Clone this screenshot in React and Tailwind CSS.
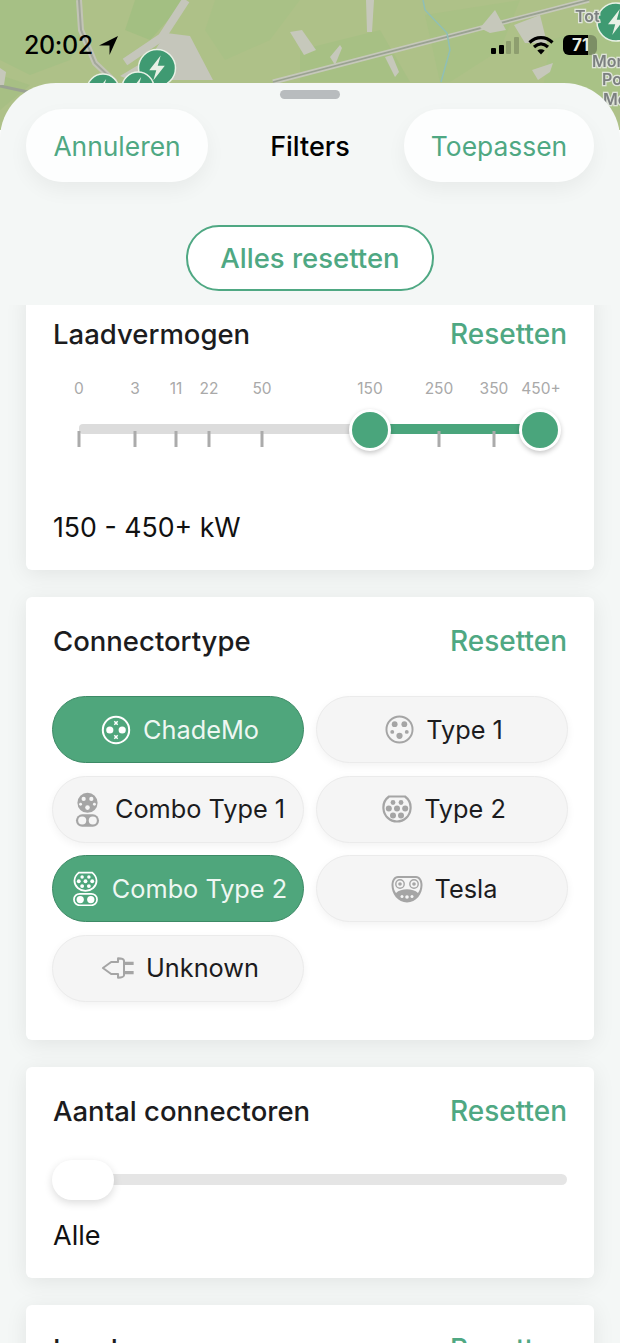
const ticks = [
    { label: '0', x: 26 },
    { label: '3', x: 82 },
    { label: '11', x: 123 },
    { label: '22', x: 156 },
    { label: '50', x: 209 },
    { label: '150', x: 317, hidden: true },
    { label: '250', x: 386 },
    { label: '350', x: 441 },
    { label: '450+', x: 488, hidden: true },
];

const Bolt = ({ cx, cy, r }) => (
    <g>
        <circle cx={cx} cy={cy} r={r} fill="#3f9a72" stroke="#e8f1e6" strokeWidth="1.5" />
        <path
            d={`M${cx + r * 0.2} ${cy - r * 0.68} L${cx - r * 0.42} ${cy + r * 0.12} L${cx - r * 0.04} ${cy + r * 0.12} L${cx - r * 0.2} ${cy + r * 0.68} L${cx + r * 0.42} ${cy - r * 0.12} L${cx + r * 0.04} ${cy - r * 0.12} Z`}
            fill="#e8f1e6"
        />
    </g>
);

// map behind the sheet, only the top 90px or so is visible
const MapBackground = () => (
    <svg className="absolute top-0 left-0 blur-[0.6px]" width="620" height="130" viewBox="0 0 620 130">
        <rect width="620" height="130" fill="#aec188" />
        <path d="M0 0H78L84 30L70 60L30 75L0 60Z" fill="#a6c085" />
        <path d="M135 0H186L150 40L125 30Z" fill="#a3bf82" />
        <path d="M215 0H300L270 40L225 60L205 30Z" fill="#a9c186" />
        <path d="M300 50L380 30L410 82H300Z" fill="#a7c084" />
        <path d="M425 15L520 0L500 50L450 82H440Z" fill="#a9c185" />
        <path d="M550 40L620 20V110H540Z" fill="#a9c286" />
        <path d="M0 75L30 85L0 110Z" fill="#a7bf84" />
        {/* roads and built up bits */}
        <path d="M79 0L81 30L95 63L115 82" fill="none" stroke="#c2c4b6" strokeWidth="6" />
        <path d="M79 0L81 30L95 63L115 82" fill="none" stroke="#a3a79b" strokeWidth="2" />
        <path d="M186 0L162 37L125 62" fill="none" stroke="#c5c6bb" strokeWidth="8" />
        <path d="M166 33L190 36L213 80H130L120 76L150 58Z" fill="#c5c6bb" />
        <path d="M273 82L589 0" fill="none" stroke="#c6c8bb" strokeWidth="5" />
        <path d="M273 82L589 0" fill="none" stroke="#9aa292" strokeWidth="1.8" />
        <path d="M0 86L28 92" fill="none" stroke="#9aa292" strokeWidth="3" />
        <path d="M290 32L302 30L316 50L304 55Z" fill="#c6c8bb" />
        <path d="M330 57L340 45L342 48L335 65Z" fill="#c6c8bb" />
        <path d="M366 0H374L372 32H367Z" fill="#c6c8bb" />
        <path d="M385 57L392 55L399 72L395 77Z" fill="#c6c8bb" />
        <path d="M480 28L495 10L506 30L490 33Z" fill="#c6c8bb" />
        <path d="M514 25L540 15L547 43L525 43Z" fill="#c6c8bb" />
        <path d="M532 70L553 63L550 72L538 80Z" fill="#c6c8bb" />
        <path d="M423 0L425 10L447 33L450 50L441 82" fill="none" stroke="#8fbfb6" strokeWidth="1.5" />
        <path d="M0 68L6 72L4 85L0 85Z" fill="#c6c8bb" />
        <Bolt cx={157} cy={68} r={18.5} />
        <Bolt cx={103} cy={90} r={16} />
        <Bolt cx={138} cy={88} r={16} />
        <Bolt cx={616} cy={22} r={19} />
        <g fontFamily="Inter, sans-serif" fontSize="16" fontWeight="600" fill="#7c8080" stroke="#dfe4da" strokeWidth="2.5" paintOrder="stroke">
            <text x="575" y="22">Tot</text>
            <text x="592" y="67">Mor</text>
            <text x="602" y="85">Po</text>
            <text x="603" y="105">Mo</text>
        </g>
    </svg>
);

const StatusBar = () => (
    <div className="absolute top-[31px] left-[24px] right-[32px] flex items-center justify-between">
        <div className="flex items-center gap-[6px]">
            <span className="text-[25px] leading-[28px] font-medium tracking-[-0.4px] text-black">20:02</span>
            <svg width="19" height="19" viewBox="0 0 19 19">
                <path d="M19 0L0 9.5H10.5V19Z" fill="#000" />
            </svg>
        </div>
        <div className="flex items-center gap-[9px]">
            <svg width="28" height="17" viewBox="0 0 28 17">
                <rect x="0" y="11" width="5" height="6" rx="1" fill="#000" />
                <rect x="8" y="8" width="5" height="9" rx="1" fill="#000" />
                <rect x="15" y="4" width="5" height="13" rx="1" fill="#000" opacity="0.18" />
                <rect x="23" y="0" width="5" height="17" rx="1" fill="#000" opacity="0.18" />
            </svg>
            <svg width="26" height="19" viewBox="0 0 26 19" fill="none" stroke="#000" strokeWidth="3.2">
                <path d="M1.5 6.5C8.5 0 17.5 0 24.5 6.5" />
                <path d="M6 11C10.5 7 15.5 7 20 11" />
                <path d="M13 18.5L9.3 14.5C11.5 12.8 14.5 12.8 16.7 14.5Z" fill="#000" stroke="none" />
            </svg>
            <div className="relative flex h-[20px] w-[25px] items-center rounded-l-[6px] bg-black">
                <span className="pl-[9px] text-[17px] leading-none font-bold text-[#e6eadf]">71</span>
                <span className="absolute left-[25px] top-0 h-[20px] w-[9px] rounded-r-[6px] bg-[#5f6a50]/60"></span>
            </div>
        </div>
    </div>
);

const PowerSlider = () => (
    <div className="relative mt-[31px] h-[132px]">
        {ticks.map((t) => (
            <span
                key={t.label}
                className="absolute top-0 -translate-x-1/2 text-[15.5px] leading-[18px] text-[#a9a9a9]"
                style={{ left: t.x }}
            >
                {t.label}
            </span>
        ))}
        <div className="absolute top-[44px] left-[26px] h-[10px] w-[300px] rounded-l-[4px] bg-[#dcdcdc]"></div>
        <div className="absolute top-[44px] left-[317px] h-[10px] w-[170px] bg-[#4aa57c]"></div>
        {ticks.filter((t) => !t.hidden).map((t) => (
            <span key={t.label} className="absolute top-[51px] h-[16px] w-[3px] -translate-x-1/2 bg-[#ababab]" style={{ left: t.x }}></span>
        ))}
        {[317, 487].map((x) => (
            <span
                key={x}
                className="absolute top-[29px] h-[42px] w-[42px] -translate-x-1/2 rounded-full border-[3px] border-white bg-[#4aa57c] shadow-[0_2px_5px_rgba(0,0,0,0.22)]"
                style={{ left: x }}
            ></span>
        ))}
    </div>
);

const ChadeMoIcon = () => (
    <svg width="30" height="30" viewBox="0 0 30 30" fill="none" stroke="currentColor">
        <circle cx="15" cy="15" r="13.2" strokeWidth="2" />
        <circle cx="8.8" cy="15" r="3.6" fill="currentColor" stroke="none" />
        <circle cx="21.2" cy="15" r="3.6" fill="currentColor" stroke="none" />
        <path d="M13.3 6.3L16.7 9.7M16.7 6.3L13.3 9.7M13.3 20.3L16.7 23.7M16.7 20.3L13.3 23.7" strokeWidth="1.5" />
    </svg>
);

const Type1Icon = () => (
    <svg width="29" height="29" viewBox="0 0 30 30" fill="currentColor">
        <circle cx="15" cy="15" r="13.5" fill="none" stroke="currentColor" strokeWidth="2" />
        <circle cx="10" cy="9.5" r="3" />
        <circle cx="20" cy="9.5" r="3" />
        <circle cx="15" cy="21.5" r="3.2" />
        <circle cx="7.5" cy="17.5" r="2" />
        <circle cx="22.5" cy="17.5" r="2" />
    </svg>
);

const Type2Icon = () => (
    <svg width="30" height="28" viewBox="0 0 30 28" fill="currentColor">
        <path d="M7 1.5H23C27 4.5 29 9.5 28.5 14C28 21 22 26.5 15 26.5C8 26.5 2 21 1.5 14C1 9.5 3 4.5 7 1.5Z" fill="none" stroke="currentColor" strokeWidth="2.2" />
        <circle cx="11" cy="7.5" r="2.4" />
        <circle cx="19" cy="7.5" r="2.4" />
        <circle cx="6.8" cy="13.5" r="3" />
        <circle cx="15" cy="13.5" r="3" />
        <circle cx="23.2" cy="13.5" r="3" />
        <circle cx="11" cy="20.5" r="3" />
        <circle cx="19" cy="20.5" r="3" />
    </svg>
);

const TeslaIcon = () => (
    <svg width="32" height="28" viewBox="0 0 32 28">
        <path d="M7 1H25C29 1 31.5 5 31.5 10C31.5 19 25 27.5 16 27.5C7 27.5 0.5 19 0.5 10C0.5 5 3 1 7 1Z" fill="currentColor" />
        <path d="M7 3H25C27.5 3 29.5 6 29.5 10C29.5 13 28.5 16 27 18C22 13 10 13 5 18C3.5 16 2.5 13 2.5 10C2.5 6 4.5 3 7 3Z" fill="#f5f5f5" />
        <circle cx="9" cy="9" r="4.2" fill="none" stroke="currentColor" strokeWidth="1.4" />
        <circle cx="9" cy="9" r="1.8" fill="currentColor" />
        <circle cx="23" cy="9" r="4.2" fill="none" stroke="currentColor" strokeWidth="1.4" />
        <circle cx="23" cy="9" r="1.8" fill="currentColor" />
        <circle cx="11" cy="21.5" r="1.5" fill="#f5f5f5" />
        <circle cx="16" cy="22" r="1.8" fill="#f5f5f5" />
        <circle cx="21" cy="21.5" r="1.5" fill="#f5f5f5" />
    </svg>
);

const ComboType1Icon = () => (
    <svg width="25" height="35" viewBox="0 0 26 36" fill="currentColor">
        <circle cx="13" cy="11" r="10.5" />
        <circle cx="9" cy="7" r="2.2" fill="#f5f5f5" />
        <circle cx="17" cy="7" r="2.2" fill="#f5f5f5" />
        <circle cx="5.8" cy="12.5" r="1.5" fill="#f5f5f5" />
        <circle cx="20.2" cy="12.5" r="1.5" fill="#f5f5f5" />
        <circle cx="13" cy="16" r="2.4" fill="#f5f5f5" />
        <rect x="1" y="23" width="24" height="13" rx="6.5" />
        <circle cx="7.5" cy="29.5" r="4.2" fill="#f5f5f5" />
        <circle cx="18.5" cy="29.5" r="4.2" fill="#f5f5f5" />
    </svg>
);

const ComboType2Icon = () => (
    <svg width="25" height="35" viewBox="0 0 26 36" fill="none" stroke="currentColor">
        <path d="M6 1.5H20C23 4 24.5 7 24.5 10C24.5 16 19 20.5 13 20.5C7 20.5 1.5 16 1.5 10C1.5 7 3 4 6 1.5Z" strokeWidth="1.8" />
        <g fill="currentColor" stroke="none">
            <circle cx="9.5" cy="6" r="1.8" />
            <circle cx="16.5" cy="6" r="1.8" />
            <circle cx="6" cy="10.5" r="2" />
            <circle cx="13" cy="10.5" r="2" />
            <circle cx="20" cy="10.5" r="2" />
            <circle cx="9.5" cy="15.5" r="2" />
            <circle cx="16.5" cy="15.5" r="2" />
        </g>
        <rect x="1" y="23.5" width="24" height="12" rx="6" strokeWidth="1.8" />
        <circle cx="7.5" cy="29.5" r="3.8" fill="currentColor" stroke="none" />
        <circle cx="18.5" cy="29.5" r="3.8" fill="currentColor" stroke="none" />
    </svg>
);

const PlugIcon = () => (
    <svg width="35" height="22" viewBox="0 0 36 24" fill="none" stroke="currentColor" strokeWidth="2.2" strokeLinejoin="round">
        <path d="M1 12L10 5.5H17.5V1.5C21 1.5 23.5 1.5 24 4V20C23.5 22.5 21 22.5 17.5 22.5V18.5H10Z" />
        <path d="M25 7H34.5M25 17H34.5" strokeWidth="3.4" />
    </svg>
);

const connectors = [
    { name: 'ChadeMo', icon: <ChadeMoIcon />, active: true, gap: 'gap-[12px]' },
    { name: 'Type 1', icon: <Type1Icon />, gap: 'gap-[12px]' },
    { name: 'Combo Type 1', icon: <ComboType1Icon />, gap: 'gap-[15px]' },
    { name: 'Type 2', icon: <Type2Icon />, gap: 'gap-[12px]' },
    { name: 'Combo Type 2', icon: <ComboType2Icon />, active: true, gap: 'gap-[14px]' },
    { name: 'Tesla', icon: <TeslaIcon />, gap: 'gap-[12px]' },
    { name: 'Unknown', icon: <PlugIcon />, gap: 'gap-[10px]' },
];

const CardHeader = ({ title }) => (
    <div className="flex items-center justify-between pt-[1px]">
        <h3 className="text-[27.5px] leading-[30px] font-[550] text-[#1c1c1e]">{title}</h3>
        <button className="text-[28px] leading-[30px] font-[550] text-[#4fa883]">Resetten</button>
    </div>
);

const Card = ({ children, className }) => (
    <section className={`rounded-[6px] bg-white px-[27px] shadow-[0_4px_22px_rgba(0,0,0,0.08)] ${className}`}>{children}</section>
);

export default function App() {
    return (
        <div className="relative h-[1343px] w-[620px] overflow-hidden font-['Inter',sans-serif]">
            <MapBackground />
            <StatusBar />

            <div className="absolute top-[83px] right-0 bottom-0 left-0 rounded-t-[56px] bg-[#f4f7f6]">
                <div className="mx-auto mt-[7px] h-[9px] w-[60px] rounded-full bg-[#b8bcbe]"></div>

                <div className="mt-[10px] flex items-center px-[26px]">
                    <button className="flex h-[73px] w-[182px] items-center justify-center rounded-full bg-white/85 pt-[2px] text-[26.4px] text-[#4fa883] shadow-[0_8px_20px_rgba(0,0,0,0.05)]">
                        Annuleren
                    </button>
                    <h2 className="flex-1 pt-[3px] pl-[8px] text-center text-[27px] font-[550] text-black">Filters</h2>
                    <button className="flex h-[73px] w-[190px] items-center justify-center rounded-full bg-white/85 pt-[2px] text-[26.4px] text-[#4fa883] shadow-[0_8px_20px_rgba(0,0,0,0.05)]">
                        Toepassen
                    </button>
                </div>

                <div className="mt-[43px] flex justify-center">
                    <button className="h-[66px] w-[248px] rounded-full border-2 border-[#4fa883] bg-white pt-[2px] text-[27.5px] font-[550] text-[#4fa883]">
                        Alles resetten
                    </button>
                </div>

                <div className="mt-[14px] h-[1038px] overflow-hidden px-[26px]">
                    <div className="-mt-[15px] flex flex-col gap-[27px]">
                        <Card className="h-[280px] pt-[28px]">
                            <CardHeader title="Laadvermogen" />
                            <PowerSlider />
                            <p className="text-[26.7px] leading-[30px] text-[#111]">150 - 450+ kW</p>
                        </Card>

                        <Card className="h-[443px] pt-[28px]">
                            <CardHeader title="Connectortype" />
                            <div className="-mx-[1px] mt-[40px] grid grid-cols-2 gap-x-[12px] gap-y-[12.5px]">
                                {connectors.map((c) => (
                                    <button
                                        key={c.name}
                                        className={`flex h-[67px] items-center justify-center rounded-full border pl-[4px] text-[25.3px] ${c.gap} ${
                                            c.active
                                                ? 'border-[#3d8a66] bg-[#4fa67c] text-[#eef7f2]'
                                                : 'border-[#ebebeb] bg-[#f5f5f5] text-[#1c1c1e] shadow-[0_3px_8px_rgba(0,0,0,0.05)]'
                                        }`}
                                    >
                                        <span className={c.active ? 'text-white' : 'text-[#a5a5a5]'}>{c.icon}</span>
                                        {c.name}
                                    </button>
                                ))}
                            </div>
                        </Card>

                        <Card className="h-[211px] pt-[28px]">
                            <CardHeader title="Aantal connectoren" />
                            <div className="relative mt-[34px] h-[40px]">
                                <div className="absolute top-[14px] right-0 left-0 h-[11px] rounded-full bg-[#e5e5e5]"></div>
                                <div className="absolute top-0 left-[-1px] h-[40px] w-[62px] rounded-[20px] bg-white shadow-[0_3px_9px_rgba(0,0,0,0.14)]"></div>
                            </div>
                            <p className="mt-[20px] text-[27px] leading-[32px] text-[#111]">Alle</p>
                        </Card>

                        <Card className="h-[120px] pt-[28px]">
                            <CardHeader title="Land" />
                        </Card>
                    </div>
                </div>
            </div>
        </div>
    );
}
